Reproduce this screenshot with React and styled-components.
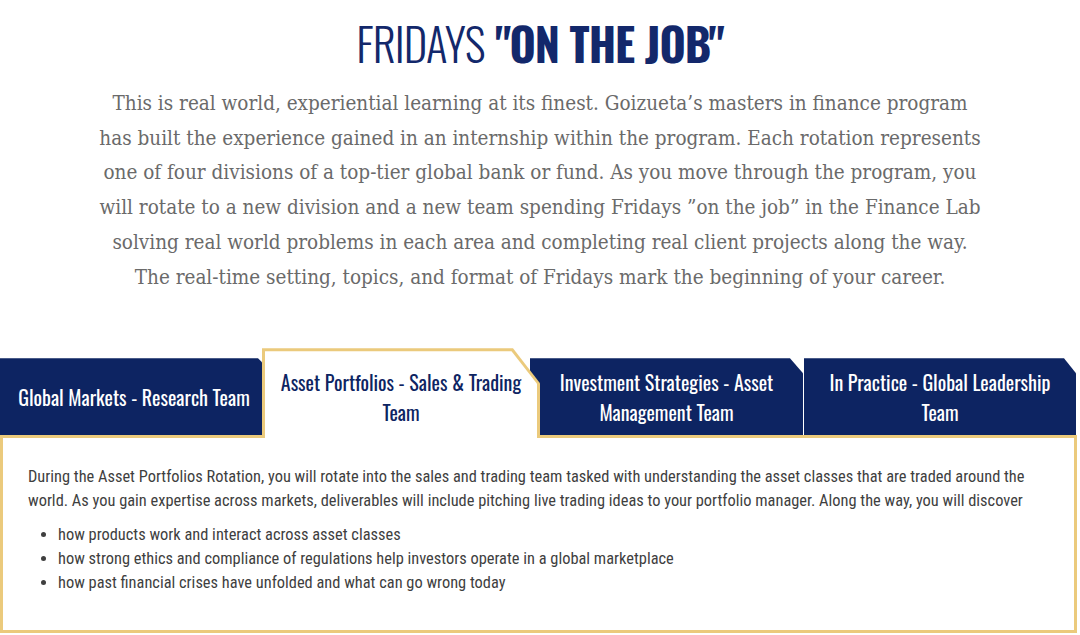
import React from 'react';
import styled, { createGlobalStyle } from 'styled-components';

const navy = '#0d2462';
const gold = '#ebca7c';

const Global = createGlobalStyle`
  body {
    margin: 0;
    background: #fff;
  }
  * { box-sizing: border-box; }
`;

const Page = styled.main`
  width: 1080px;
  padding-top: 13px;
`;

const Title = styled.h1`
  margin: 0;
  text-align: center;
  font-family: "Oswald", "Roboto Condensed", sans-serif;
  font-size: 45px;
  line-height: 60px;
  color: #13286b;
  letter-spacing: -1px;
`;

const Light = styled.span`
  font-weight: 300;
`;

const Bold = styled.span`
  font-weight: 700;
`;

const Intro = styled.p`
  margin: 13px auto 0;
  text-align: center;
  font-family: "DejaVu Serif Condensed", "DejaVu Serif", serif;
  font-size: 20.5px;
  line-height: 34.7px;
  color: #6a6a6a;
`;

const Tabs = styled.section`
  width: 1077px;
  margin-top: 54px;
`;

const TabRow = styled.div`
  display: flex;
  align-items: flex-end;
  height: 87px;
  position: relative;
  z-index: 2;
`;

const Tab = styled.button`
  flex: none;
  width: ${p => p.$w}px;
  margin-left: ${p => p.$ml || 0}px;
  height: 77px;
  padding: 0 10px 0 ${p => p.$pl || 10}px;
  border: 0;
  background: ${navy};
  color: #fff;
  font-family: "Oswald", "Roboto Condensed", sans-serif;
  font-size: 20px;
  font-weight: 400;
  line-height: 30px;
  text-align: center;
  cursor: pointer;
  clip-path: polygon(0 0, calc(100% - ${p => p.$cx}px) 0, 100% ${p => p.$cy}px, 100% 100%, 0 100%);
  position: relative;
  z-index: 1;
`;

const ActiveTab = styled.button`
  flex: none;
  width: 278px;
  height: 90px;
  margin-bottom: -3px;
  padding: 10px 10px 3px;
  border: 0;
  background: ${gold};
  color: ${navy};
  font-family: "Oswald", "Roboto Condensed", sans-serif;
  font-size: 20px;
  font-weight: 400;
  line-height: 30px;
  text-align: center;
  cursor: pointer;
  position: relative;
  z-index: 3;
  clip-path: polygon(0 0, calc(100% - 27px) 0, 100% 35px, 100% 100%, 0 100%);

  &::before {
    content: "";
    position: absolute;
    inset: 3px 3px 0 3px;
    background: #fff;
    clip-path: polygon(0 0, calc(100% - 25.5px) 0, 100% 32.5px, 100% 100%, 0 100%);
  }

  & > span {
    position: relative;
  }
`;

const Panel = styled.div`
  border: 3px solid ${gold};
  padding: 27px 25px 35px 25px;
  font-family: "Roboto Condensed", "Roboto", sans-serif;
  font-size: 16.4px;
  line-height: 24px;
  color: #3f3f3f;
  position: relative;
  z-index: 1;
`;

const PanelText = styled.p`
  margin: 0 0 10px;
`;

const List = styled.ul`
  margin: 0;
  padding-left: 30px;
`;

export default function App() {
  return (
    <Page>
      <Global />
      <Title>
        <Light>FRIDAYS</Light> <Bold>"ON THE JOB"</Bold>
      </Title>
      <Intro>
        This is real world, experiential learning at its finest. Goizueta’s masters in finance program<br />
        has built the experience gained in an internship within the program. Each rotation represents<br />
        one of four divisions of a top-tier global bank or fund. As you move through the program, you<br />
        will rotate to a new division and a new team spending Fridays ”on the job” in the Finance Lab<br />
        solving real world problems in each area and completing real client projects along the way.<br />
        The real-time setting, topics, and format of Fridays mark the beginning of your career.
      </Intro>
      <Tabs>
        <TabRow>
          <Tab $w={262} $pl={16} $cx={4} $cy={4}>Global Markets - Research Team</Tab>
          <ActiveTab>
            <span>Asset Portfolios - Sales &amp; Trading Team</span>
          </ActiveTab>
          <Tab $w={273} $ml={-10} $cx={13} $cy={15}>Investment Strategies - Asset Management Team</Tab>
          <Tab $w={272} $ml={1} $cx={12} $cy={15}>In Practice - Global Leadership Team</Tab>
        </TabRow>
        <Panel>
          <PanelText>
            During the Asset Portfolios Rotation, you will rotate into the sales and trading team tasked with understanding the asset classes that are traded around the world. As you gain expertise across markets, deliverables will include pitching live trading ideas to your portfolio manager. Along the way, you will discover
          </PanelText>
          <List>
            <li>how products work and interact across asset classes</li>
            <li>how strong ethics and compliance of regulations help investors operate in a global marketplace</li>
            <li>how past financial crises have unfolded and what can go wrong today</li>
          </List>
        </Panel>
      </Tabs>
    </Page>
  );
}
